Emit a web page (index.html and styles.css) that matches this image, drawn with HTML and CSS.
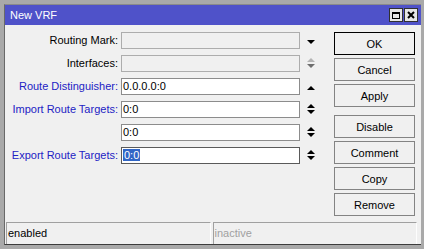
FILE: index.html
```html
<!DOCTYPE html>
<html lang="en">
<head>
    <meta charset="UTF-8">
    <title>New VRF</title>
    <link rel="stylesheet" href="styles.css">
</head>
<body>
    <div class="window">
        <!-- Title bar -->
        <div class="titlebar">
            <span class="title">New VRF</span>
            <div class="title-buttons">
                <span class="tb"><span class="max-icon"></span></span>
                <span class="tb">
                    <svg width="8" height="8" viewBox="0 0 8 8"><path d="M1 1 L7 7 M7 1 L1 7" stroke="#000" stroke-width="2"/></svg>
                </span>
            </div>
        </div>

        <div class="content">
            <!-- Form fields -->
            <div class="form">
                <div class="label">Routing Mark:</div>
                <div class="field disabled"></div>
                <div class="arrows">
                    <svg width="20" height="17" viewBox="0 0 20 17"><path d="M7 8 H15 L11 12 Z" fill="#000"/></svg>
                </div>

                <div class="label">Interfaces:</div>
                <div class="field disabled"></div>
                <div class="arrows">
                    <svg width="20" height="17" viewBox="0 0 20 17"><path d="M7 7 H15 L11 3 Z" fill="#b4b4b4"/><path d="M7 9 H15 L11 13 Z" fill="#6e6e6e"/></svg>
                </div>

                <div class="label changed">Route Distinguisher:</div>
                <div class="field">0.0.0.0:0</div>
                <div class="arrows">
                    <svg width="20" height="17" viewBox="0 0 20 17"><path d="M7 12 H15 L11 8 Z" fill="#000"/></svg>
                </div>

                <div class="label changed">Import Route Targets:</div>
                <div class="field">0:0</div>
                <div class="arrows">
                    <svg width="20" height="17" viewBox="0 0 20 17"><path d="M7 7 H15 L11 3 Z" fill="#000"/><path d="M7 9 H15 L11 13 Z" fill="#000"/></svg>
                </div>

                <div class="label"></div>
                <div class="field">0:0</div>
                <div class="arrows">
                    <svg width="20" height="17" viewBox="0 0 20 17"><path d="M7 7 H15 L11 3 Z" fill="#000"/><path d="M7 9 H15 L11 13 Z" fill="#000"/></svg>
                </div>

                <div class="label changed">Export Route Targets:</div>
                <div class="field focused"><span class="selected">0:0</span></div>
                <div class="arrows">
                    <svg width="20" height="17" viewBox="0 0 20 17"><path d="M7 7 H15 L11 3 Z" fill="#000"/><path d="M7 9 H15 L11 13 Z" fill="#000"/></svg>
                </div>
            </div>

            <!-- Buttons -->
            <div class="buttons">
                <div class="btn default">OK</div>
                <div class="btn">Cancel</div>
                <div class="btn">Apply</div>
                <div class="btn spaced">Disable</div>
                <div class="btn">Comment</div>
                <div class="btn">Copy</div>
                <div class="btn">Remove</div>
            </div>
        </div>

        <!-- Status bar -->
        <div class="statusbar">
            <div class="status">enabled</div>
            <div class="status inactive">inactive</div>
        </div>
    </div>
</body>
</html>
```

FILE: styles.css
```css
body {
    margin: 0;
    padding: 4px 3px 0 4px;
    background-color: #a9a9a9;
    font-family: "Liberation Sans", Arial, sans-serif;
    font-size: 11px;
    color: #000;
}

.window {
    width: 417px;
    box-sizing: border-box;
    background-color: #f0f0f0;
    border-left: 1px solid #696969;
    border-top: 1px solid #8a8a8a;
    border-bottom: 1px solid #3c3c3c;
}

.titlebar {
    height: 20px;
    background-color: #4f52c9;
    color: #fff;
    display: flex;
    align-items: center;
    justify-content: space-between;
    padding: 0 3px 0 5px;
}

.title-buttons {
    display: flex;
    gap: 1px;
}

.tb {
    width: 14px;
    height: 14px;
    box-sizing: border-box;
    background-color: #e6e6e6;
    border: 1px solid #303030;
    display: flex;
    align-items: center;
    justify-content: center;
}

.max-icon {
    width: 8px;
    height: 7px;
    box-sizing: border-box;
    border: 1px solid #000;
    border-top-width: 2px;
}

.content {
    display: flex;
    gap: 14px;
    padding: 7px 6px 6px 3px;
}

.form {
    display: grid;
    grid-template-columns: 113px 179px 20px;
    grid-auto-rows: 17px;
    row-gap: 6px;
    align-content: start;
}

.label {
    text-align: right;
    padding-right: 3px;
    line-height: 17px;
    white-space: nowrap;
}

.label.changed {
    color: #2222c4;
}

.field {
    box-sizing: border-box;
    height: 17px;
    border: 1px solid #8c8c8c;
    background-color: #fff;
    padding-left: 1px;
    line-height: 15px;
}

.field.disabled {
    background-color: #f0f0f0;
    border-color: #adadad;
}

.field.focused {
    border-color: #5a5a5a;
}

.selected {
    background-color: #3166c6;
    color: #fff;
    padding: 0 1px;
}

.arrows svg {
    display: block;
}

.buttons {
    display: flex;
    flex-direction: column;
    gap: 3px;
    width: 81px;
}

.btn {
    height: 23px;
    box-sizing: border-box;
    border: 1px solid #838383;
    background-color: #f0f0f0;
    display: flex;
    align-items: center;
    justify-content: center;
}

.btn.default {
    border-color: #000;
}

.btn.spaced {
    margin-top: 5px;
}

.statusbar {
    display: flex;
    gap: 2px;
    padding: 0 4px 0 1px;
    height: 22px;
}

.status {
    flex: 1;
    box-sizing: border-box;
    border-top: 1px solid #a0a0a0;
    border-left: 1px solid #a0a0a0;
    border-right: 1px solid #fdfdfd;
    padding-left: 1px;
    line-height: 21px;
}

.status.inactive {
    color: #a0a0a0;
}
```
